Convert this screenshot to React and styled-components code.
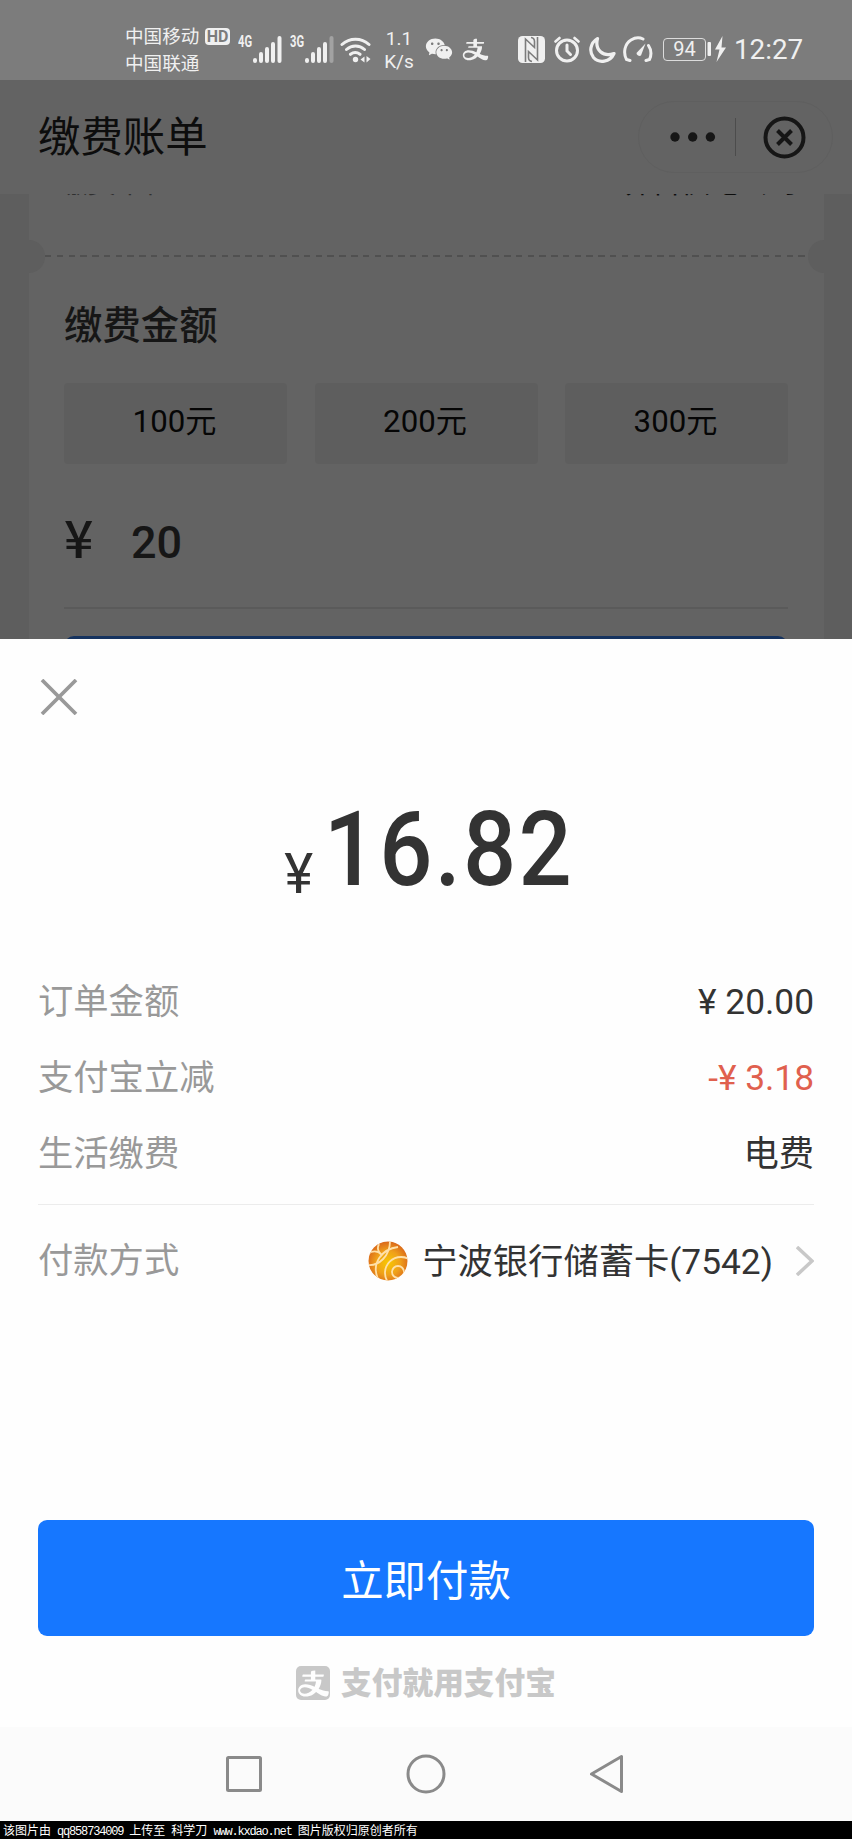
import React from 'react';
import styled, { createGlobalStyle } from 'styled-components';
import { AiOutlineAlipay, AiFillWechat } from 'react-icons/ai';

const GlobalStyle = createGlobalStyle`
  * {
    box-sizing: border-box;
  }
  body {
    margin: 0;
    background: #000;
    font-family: Roboto, 'Noto Sans CJK SC', sans-serif;
  }
  svg {
    display: block;
    flex: none;
  }
`;

const Screen = styled.div`
  display: flex;
  flex-direction: column;
  width: 852px;
  height: 1839px;
  overflow: hidden;
`;

/* status bar */
const StatusBar = styled.header`
  display: flex;
  align-items: center;
  height: 80px;
  padding: 18px 0 0 125px;
  background: #7c7c7c;
  color: #f0f0f0;
`;
const Carriers = styled.div`
  width: 80px;
  padding-top: 3px;
  font-size: 18.6px;
  line-height: 27px;
  white-space: nowrap;
`;
const HdBadge = styled.span`
  align-self: flex-start;
  width: 25px;
  height: 17px;
  margin-top: 10px;
  border-radius: 4px;
  background: #f0f0f0;
  color: #7c7c7c;
  font-size: 16px;
  font-weight: 700;
  line-height: 17px;
  text-align: center;
`;
const NetType = styled.span`
  align-self: flex-start;
  width: 15px;
  margin: 16px 0 0 8px;
  font: 700 16px/16px Roboto, sans-serif;
`;
const Squeeze = styled.span`
  display: inline-block;
  transform: scaleX(0.7);
  transform-origin: left;
`;
const Speed = styled.div`
  width: 32px;
  margin-left: 11px;
  padding-top: 2px;
  font-size: 19px;
  line-height: 23px;
  text-align: center;
`;
const StatusIcon = styled.span`
  display: flex;
  margin-left: ${(props) => props.$gap}px;
`;
const Battery = styled.span`
  width: 43px;
  height: 23px;
  margin-left: 10px;
  border: 1.5px solid #dcdcdc;
  border-radius: 4px;
  font-size: 20px;
  line-height: 21px;
  text-align: center;
`;
const Clock = styled.span`
  margin: 2px 0 0 7px;
  font-size: 27.8px;
  line-height: 28px;
`;

/* bill page under the mask */
const BillPage = styled.main`
  height: 559px;
  overflow: hidden;
  background: #5e5e5e;
  color: #161616;
`;
const TitleBar = styled.div`
  display: flex;
  align-items: center;
  justify-content: space-between;
  height: 114px;
  padding: 0 19px 0 38px;
  background: #636363;
`;
const PageTitle = styled.h1`
  margin: 0;
  padding-top: 2px;
  color: #0d0d0d;
  font-size: 42.4px;
  font-weight: 400;
  line-height: 60px;
`;
const Capsule = styled.div`
  display: flex;
  align-items: center;
  width: 195px;
  height: 72px;
  padding-left: 31px;
  border: 1px solid #5f5f5f;
  border-radius: 36px;
`;
const CapsuleDivider = styled.i`
  width: 1px;
  height: 38px;
  margin: 0 27px 0 19px;
  background: #4c4c4c;
`;
const Ticket = styled.section`
  margin: 0 28px 0 29px;
  background: #636363;
`;
const TicketTop = styled.div`
  height: 61px;
  overflow: hidden;
`;
const OrgRow = styled.div`
  display: flex;
  justify-content: space-between;
  margin-top: -26px;
  padding: 0 27px 0 30px;
  color: #0d0d0d;
  font-size: 29px;
  line-height: 30px;
`;
const OrgLabel = styled.span`
  padding-top: 1px;
  color: #303030;
  font-size: 28.4px;
`;
const Tear = styled.div`
  display: flex;
  align-items: center;
  justify-content: space-between;
  height: 2px;
`;
const Notch = styled.i`
  flex: none;
  width: 16px;
  height: 33px;
  border-radius: ${(props) => (props.$right ? '17px 0 0 17px' : '0 17px 17px 0')};
  background: #5e5e5e;
`;
const Dashes = styled.i`
  flex: 1;
  height: 2px;
  background: repeating-linear-gradient(90deg, #505050 0 6.5px, transparent 6.5px 11.77px);
`;
const TicketBody = styled.div`
  padding: 39px 36px 0 35px;
`;
const SectionTitle = styled.h2`
  margin: 0;
  font-size: 38.4px;
  font-weight: 500;
  line-height: 60px;
`;
const Presets = styled.div`
  display: grid;
  grid-template-columns: repeat(3, 223px);
  justify-content: space-between;
  margin-top: 27px;
`;
const Preset = styled.button`
  height: 81px;
  padding: 0 2px 3px 0;
  border: 0;
  border-radius: 4px;
  background: #5e5e5e;
  color: #060606;
  font: 400 31.2px/78px Roboto, 'Noto Sans CJK SC', sans-serif;
`;
const AmountInput = styled.div`
  display: flex;
  align-items: baseline;
  height: 145px;
  padding-top: 42px;
  border-bottom: 2px solid #5a5a5a;
  font-size: 45px;
  font-weight: 500;
  line-height: 60px;
`;
const InputYen = styled.span`
  width: 67px;
  font-family: 'Noto Sans CJK SC', sans-serif;
  font-size: 51.5px;
`;
const NextButton = styled.div`
  height: 80px;
  margin-top: 27px;
  border-radius: 10px;
  background: #16335f;
`;

/* payment sheet */
const Sheet = styled.section`
  display: flex;
  flex-direction: column;
  height: 1088px;
  padding: 40px 38px 0;
  background: #fefefe;
  color: #333;
`;
const Total = styled.div`
  display: flex;
  justify-content: flex-end;
  height: 248px;
  padding: 68px 240px 0 0;
`;
const TotalYen = styled.span`
  margin: 61px -17px 0 0;
  font: 400 55px/60px Roboto, sans-serif;
`;
/* squeezed to get the narrow digits of the price font */
const TotalValue = styled.strong`
  font-size: 104px;
  font-weight: 500;
  letter-spacing: 2.5px;
  line-height: 134px;
  transform: scaleX(0.9);
  transform-origin: right;
`;
const Rows = styled.dl`
  margin: 0;
  padding-bottom: 13px;
  border-bottom: 1px solid #ececec;
`;
const Row = styled.div`
  display: flex;
  align-items: center;
  justify-content: space-between;
  height: 76px;
  font-size: 35.3px;
  line-height: 50px;
`;
const Label = styled.dt`
  padding-top: 2px;
  color: #999;
`;
const Value = styled.dd`
  display: flex;
  align-items: center;
  margin: 0;
  padding-top: 1px;
  color: ${(props) => (props.$discount ? '#e0604e' : '#333')};
`;
const Method = styled(Row)`
  height: 110px;
`;
const BankName = styled.span`
  margin: 0 23px 0 14px;
  padding-top: 3px;
`;
const PayButton = styled.button`
  height: 116px;
  margin-top: 205px;
  padding: 8px 0 0;
  border: 0;
  border-radius: 9px;
  background: #1677ff;
  color: #fff;
  font: 400 42.4px/60px Roboto, 'Noto Sans CJK SC', sans-serif;
`;
const Slogan = styled.div`
  display: flex;
  align-items: center;
  justify-content: center;
  margin-top: 28px;
  color: #c8c8c8;
  font-size: 30.7px;
  font-weight: 900;
  line-height: 40px;
`;
const SloganLogo = styled.span`
  display: flex;
  align-items: center;
  justify-content: center;
  width: 34px;
  height: 34px;
  margin: -2px 11px 0 0;
  border-radius: 5px;
  background: #c8c8c8;
  color: #fefefe;
`;

const NavBar = styled.nav`
  display: flex;
  align-items: center;
  height: 94px;
  padding-left: 225px;
  background: #fbfbfb;
`;
const NavIcon = styled.svg`
  width: 40px;
  height: 40px;
  margin-right: 142px;
  overflow: visible;
  fill: none;
  stroke: #8a8a8a;
  stroke-width: 3;
  stroke-linejoin: round;
`;
const Watermark = styled.footer`
  height: 18px;
  padding-left: 3px;
  background: #000;
  color: #fff;
  font: 12px/18px 'Liberation Mono', monospace;
  letter-spacing: -1.18px;
  white-space: pre;
  span {
    font: 12px/18px 'Noto Sans CJK SC', sans-serif;
    letter-spacing: 0;
  }
`;

const Signal = ({ weak }) => (
  <svg width="29" height="27" viewBox="0 0 29 27" fill="none" stroke="#f0f0f0" strokeWidth="4" strokeLinecap="round">
    <path d="M2 25v-1M8 25v-7M14 25V13M20 25V8" />
    <path d="M26.500 25V2" stroke={weak ? '#a2a2a2' : '#f0f0f0'} />
  </svg>
);

const Wifi = () => (
  <svg width="32" height="27" viewBox="0 0 32 27" fill="none" stroke="#f0f0f0" strokeWidth="3" strokeLinecap="round">
    <path d="M2 8.500a20 20 0 0 1 27 0M6.500 13.500a13.500 13.500 0 0 1 18 0M10.500 18.300a8 8 0 0 1 9.500 0" />
    <circle cx="15.500" cy="23.500" r="2.700" fill="#f0f0f0" stroke="none" />
    <path d="M24.500 20.500v6l-4-3zM26.500 20v6.500l4-3.500z" fill="#f0f0f0" stroke="none" />
  </svg>
);

const Nfc = () => (
  <svg width="27" height="27" viewBox="0 0 27 27">
    <rect width="27" height="27" rx="4.500" fill="#f0f0f0" />
    <path
      d="M7.500 26V3L16.500 11.500V5.500Q16.500 2 13 1.500M19.500 1V24L10.500 15.500V21.500Q10.500 25 14 25.500"
      fill="none"
      stroke="#7c7c7c"
      strokeWidth="1.600"
    />
  </svg>
);

const Alarm = () => (
  <svg width="26" height="27" viewBox="0 0 26 27" fill="none" stroke="#f0f0f0" strokeLinecap="round">
    <circle cx="13" cy="14.500" r="10.500" strokeWidth="3" />
    <path d="M13 9v6l3.500 3.500" strokeWidth="3" />
    <path d="M1.500 5.500l4-3.500M24.500 5.500l-4-3.500" strokeWidth="2.600" />
  </svg>
);

const Moon = () => (
  <svg width="27" height="27" viewBox="0 0 27 27" fill="none" stroke="#f0f0f0" strokeWidth="3.200" strokeLinejoin="round">
    <path d="M8.500 2.500C1 7 0 16 4.500 21.500C10 27.500 21 26.500 25 17.500C14 21.500 5.500 14 8.500 2.500z" />
  </svg>
);

const Gauge = () => (
  <svg width="30" height="27" viewBox="0 0 30 27" fill="none" stroke="#f0f0f0" strokeLinecap="round">
    <path d="M7 24.500l-3.500-1C0 17 1.500 8 8 4C12 1.500 17 1.500 20 3M25.500 9.500C28.500 14 28.500 19 26.500 23.500l-3.500 1" strokeWidth="3" />
    <path d="M22.500 7.500l-4.500 12a3 3 0 0 1-4.500-2.500z" fill="#f0f0f0" stroke="none" />
  </svg>
);

const BankLogo = () => (
  <svg width="40" height="40" viewBox="0 0 40 40">
    <defs>
      <radialGradient id="ball" cx="0.5" cy="0.55" r="0.55">
        <stop offset="0" stopColor="#f8c800" />
        <stop offset="0.55" stopColor="#efa01a" />
        <stop offset="1" stopColor="#d9651a" />
      </radialGradient>
      <clipPath id="ballEdge">
        <circle cx="20" cy="20" r="19.500" />
      </clipPath>
    </defs>
    <g clipPath="url(#ballEdge)" fill="none" stroke="#ffe0a8" strokeWidth="1.800">
      <circle cx="20" cy="20" r="20" fill="url(#ball)" stroke="none" />
      <circle cx="30" cy="31" r="6" />
      <circle cx="33" cy="32" r="16" />
      <path d="M0 24C11 25 22 15 22 0M10 38C3 22 14 8 30 6M0 13c5-4 10-3 14 1M11 3c-2 4-1 8 3 11" />
    </g>
  </svg>
);

const ROWS = [
  { label: '订单金额', value: '¥ 20.00' },
  { label: '支付宝立减', value: '-¥ 3.18', discount: true },
  { label: '生活缴费', value: '电费' },
];

const App = () => {
  return (
    <Screen>
      <GlobalStyle />
      <StatusBar>
        <Carriers>
          <div>中国移动</div>
          <div>中国联通</div>
        </Carriers>
        <HdBadge>HD</HdBadge>
        <NetType>
          <Squeeze>4G</Squeeze>
        </NetType>
        <Signal />
        <NetType>
          <Squeeze>3G</Squeeze>
        </NetType>
        <Signal weak />
        <StatusIcon $gap={6}>
          <Wifi />
        </StatusIcon>
        <Speed>
          <div>1.1</div>
          <div>K/s</div>
        </Speed>
        <StatusIcon $gap={9}>
          <AiFillWechat size={30} />
        </StatusIcon>
        <StatusIcon $gap={7}>
          <AiOutlineAlipay size={29} />
        </StatusIcon>
        <StatusIcon $gap={28}>
          <Nfc />
        </StatusIcon>
        <StatusIcon $gap={9}>
          <Alarm />
        </StatusIcon>
        <StatusIcon $gap={9}>
          <Moon />
        </StatusIcon>
        <StatusIcon $gap={7}>
          <Gauge />
        </StatusIcon>
        <Battery>94</Battery>
        <StatusIcon $gap={1}>
          <svg width="20" height="26" viewBox="0 0 20 26" fill="#f0f0f0">
            <rect x="0.500" y="6" width="3.500" height="14" rx="1" />
            <path d="M15.500 0L8 13.500h4.500L9.500 26L19 11.500h-4.500z" />
          </svg>
        </StatusIcon>
        <Clock>12:27</Clock>
      </StatusBar>

      <BillPage>
        <TitleBar>
          <PageTitle>缴费账单</PageTitle>
          <Capsule>
            <svg width="46" height="12" viewBox="0 0 46 12" fill="#161616">
              <circle cx="5" cy="6" r="4.700" />
              <circle cx="22.700" cy="6" r="4.700" />
              <circle cx="40.400" cy="6" r="4.700" />
            </svg>
            <CapsuleDivider />
            <svg width="43" height="43" viewBox="0 0 43 43" fill="none" stroke="#161616" strokeWidth="4">
              <circle cx="21.500" cy="21.500" r="19" />
              <path d="M14.500 14.500l14 14M28.500 14.500l-14 14" />
            </svg>
          </Capsule>
        </TitleBar>
        <Ticket>
          <TicketTop>
            <OrgRow>
              <OrgLabel>缴费单位</OrgLabel>
              <span>界首供电公司</span>
            </OrgRow>
          </TicketTop>
          <Tear>
            <Notch />
            <Dashes />
            <Notch $right />
          </Tear>
          <TicketBody>
            <SectionTitle>缴费金额</SectionTitle>
            <Presets>
              {['100元', '200元', '300元'].map((preset) => (
                <Preset key={preset}>{preset}</Preset>
              ))}
            </Presets>
            <AmountInput>
              <InputYen>¥</InputYen>20
            </AmountInput>
            <NextButton />
          </TicketBody>
        </Ticket>
      </BillPage>

      <Sheet>
        <svg width="40" height="36" viewBox="0 0 40 36" fill="none" stroke="#999" strokeWidth="3.700">
          <path d="M4 1l34 34M38 1L4 35" />
        </svg>
        <Total>
          <TotalYen>¥</TotalYen>
          <TotalValue>16.82</TotalValue>
        </Total>
        <Rows>
          {ROWS.map(({ label, value, discount }) => (
            <Row key={label}>
              <Label>{label}</Label>
              <Value $discount={discount}>{value}</Value>
            </Row>
          ))}
        </Rows>
        <Method>
          <Label as="span">付款方式</Label>
          <Value as="span">
            <BankLogo />
            <BankName>宁波银行储蓄卡(7542)</BankName>
            <svg width="18" height="30" viewBox="0 0 18 30" fill="none" stroke="#c8c8c8" strokeWidth="3.500">
              <path d="M1 1l15 14L1 29" />
            </svg>
          </Value>
        </Method>
        <PayButton>立即付款</PayButton>
        <Slogan>
          <SloganLogo>
            <AiOutlineAlipay size={35} />
          </SloganLogo>
          支付就用支付宝
        </Slogan>
      </Sheet>

      <NavBar>
        <NavIcon viewBox="0 0 40 40">
          <rect x="2.500" y="3.500" width="33" height="33" rx="1" />
        </NavIcon>
        <NavIcon viewBox="0 0 40 40">
          <circle cx="19" cy="20" r="18" />
        </NavIcon>
        <NavIcon viewBox="0 0 40 40">
          <path d="M32.500 2.500v35L2.500 20z" />
        </NavIcon>
      </NavBar>
      <Watermark>
        <span>该图片由</span> qq858734009 <span>上传至</span> <span>科学刀</span> www.kxdao.net <span>图片版权归原创者所有</span>
      </Watermark>
    </Screen>
  );
};

export default App;
